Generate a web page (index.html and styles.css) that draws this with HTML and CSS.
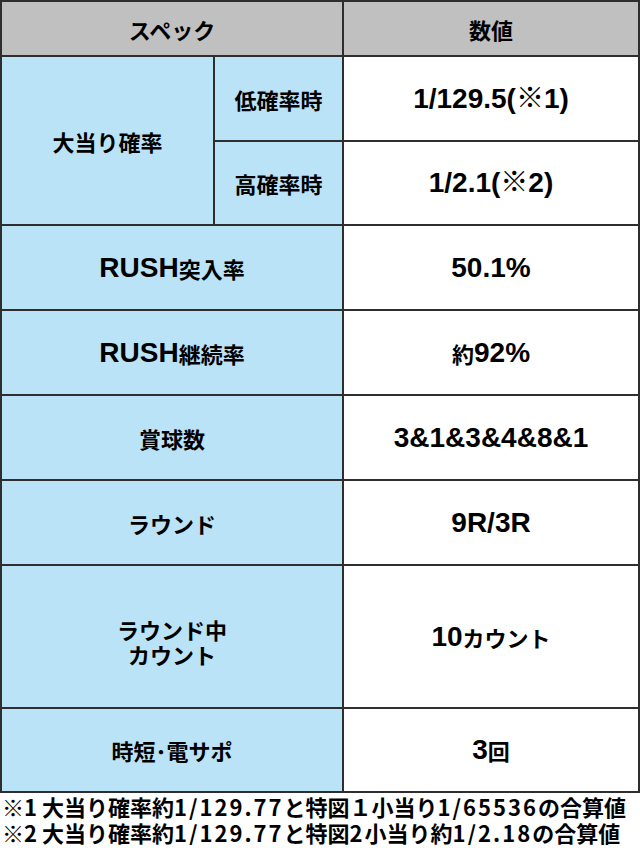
FILE: index.html
```html
<!DOCTYPE html>
<html lang="ja">
<head>
<meta charset="utf-8">
<link rel="stylesheet" href="styles.css">
</head>
<body>
<div class="spec">
  <div class="cell head span2">スペック</div>
  <div class="cell head">数値</div>

  <div class="cell label tall">大当り確率</div>
  <div class="cell label">低確率時</div>
  <div class="cell value"><span class="num">1/129.5(※1)</span></div>
  <div class="cell label">高確率時</div>
  <div class="cell value"><span class="num">1/2.1(※2)</span></div>

  <div class="cell label span2"><span class="num">RUSH</span>突入率</div>
  <div class="cell value"><span class="num">50.1%</span></div>

  <div class="cell label span2"><span class="num">RUSH</span>継続率</div>
  <div class="cell value">約<span class="num">92%</span></div>

  <div class="cell label span2">賞球数</div>
  <div class="cell value"><span class="num">3&amp;1&amp;3&amp;4&amp;8&amp;1</span></div>

  <div class="cell label span2">ラウンド</div>
  <div class="cell value"><span class="num">9R/3R</span></div>

  <div class="cell label span2 two">ラウンド中<br>カウント</div>
  <div class="cell value"><span class="num">10</span>カウント</div>

  <div class="cell label span2">時短･電サポ</div>
  <div class="cell value"><span class="num">3</span>回</div>
</div>
<div class="notes">
  <p>※1 大当り確率約<span class="lat">1/129.77</span>と特図１小当り<span class="lat">1/65536</span>の合算値</p>
  <p>※2 大当り確率約<span class="lat">1/129.77</span>と特図<span class="lat">2</span>小当り約<span class="lat">1/2.18</span>の合算値</p>
</div>
</body>
</html>
```
FILE: styles.css
```css
html, body {
  margin: 0;
  padding: 0;
  background: #fff;
}
body {
  width: 640px;
  font-family: "Liberation Sans", "Noto Sans CJK JP", sans-serif;
  font-weight: bold;
  color: #000;
}
.spec {
  display: grid;
  grid-template-columns: 211px 127px 294px;
  grid-template-rows: 53px 83px 82px 83px 83px 83px 83px 141px 82px;
  gap: 2px;
  padding: 2px;
  background: #2e2e2e;
}
.cell {
  display: flex;
  align-items: center;
  justify-content: center;
  text-align: center;
  font-family: "Noto Sans CJK JP", sans-serif;
  font-size: 22px;
  line-height: 26px;
}
.num {
  font-family: "Liberation Sans", "Noto Sans CJK JP", sans-serif;
  font-size: 28px;
  vertical-align: -2px;
}
.two {
  line-height: 25px;
  padding-top: 10px;
  box-sizing: border-box;
}
.head {
  background: #c0c0c0;
}
.label {
  background: #bbe3f7;
}
.value {
  background: #fff;
}
.span2 {
  grid-column: span 2;
}
.tall {
  grid-row: span 2;
}
.notes {
  padding: 0 0 0 2px;
}
.notes p {
  margin: 0;
  font-family: "Noto Sans CJK JP", sans-serif;
  font-size: 22px;
  line-height: 26px;
  white-space: nowrap;
}
.lat {
  letter-spacing: 2px;
}
```
